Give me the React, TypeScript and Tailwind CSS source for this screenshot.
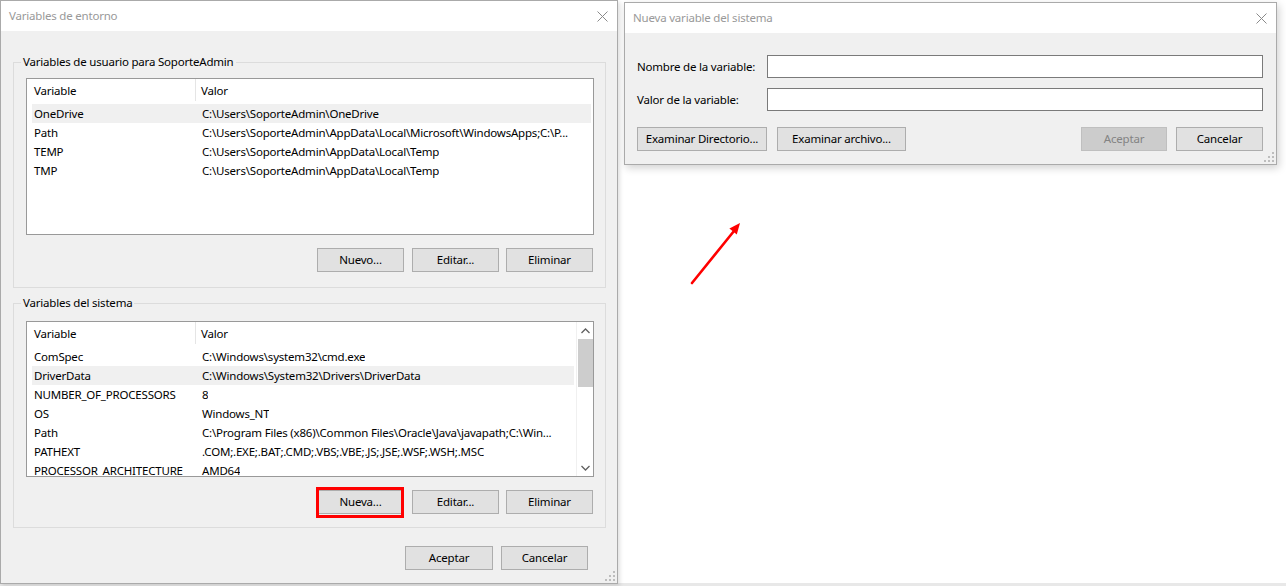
import React from "react";

const FONT = { fontFamily: '"Noto Sans", "Liberation Sans", sans-serif' };

function CloseIcon({ color = "#8a8a8a" }: { color?: string }) {
  return (
    <svg width="11" height="11" viewBox="0 0 11 11">
      <path d="M0.5 0.5 L10.5 10.5 M10.5 0.5 L0.5 10.5" stroke={color} strokeWidth="1" fill="none" />
    </svg>
  );
}

function Grip() {
  return (
    <svg width="10" height="10" viewBox="0 0 10 10">
      {[
        [8, 0],
        [4, 4],
        [8, 4],
        [0, 8],
        [4, 8],
        [8, 8],
      ].map(([x, y], i) => (
        <rect key={i} x={x} y={y} width="2" height="2" fill="#bdbdbd" />
      ))}
    </svg>
  );
}

function Btn({
  label,
  w,
  disabled = false,
}: {
  label: string;
  w: string;
  disabled?: boolean;
}) {
  return (
    <div
      className={`${w} h-[24px] flex items-center justify-center border whitespace-nowrap ${
        disabled
          ? "bg-[#cccccc] border-[#bfbfbf] text-[#838383]"
          : "bg-[#e1e1e1] border-[#adadad] text-black"
      }`}
    >
      {label}
    </div>
  );
}

type Row = { name: string; value: string; selected?: boolean };

function ListHeader({ width }: { width: string }) {
  return (
    <div className={`${width} h-[25px] flex bg-white shrink-0`}>
      <div className="w-[169px] h-[22px] pl-[7px] pt-[1px] flex items-center border-r border-[#e5e5e5]">
        Variable
      </div>
      <div className="h-[22px] pt-[1px] pl-[5px] flex items-center">Valor</div>
    </div>
  );
}

function ListRows({ rows, rowWidth }: { rows: Row[]; rowWidth: string }) {
  return (
    <div className="flex flex-col">
      {rows.map((r) => (
        <div
          key={r.name}
          className={`${rowWidth} ml-[5px] h-[19px] flex items-center whitespace-nowrap overflow-hidden ${
            r.selected ? "bg-[#f0f0f0]" : ""
          }`}
        >
          <div className="w-[164px] pl-[2px] shrink-0">{r.name}</div>
          <div className="pl-[6px] overflow-hidden">{r.value}</div>
        </div>
      ))}
    </div>
  );
}

function GroupBox({
  title,
  className,
  children,
}: {
  title: string;
  className: string;
  children: React.ReactNode;
}) {
  return (
    <div className={`relative border border-[#dcdcdc] ${className}`}>
      <span className="absolute left-[7px] -top-[9px] px-[2px] bg-[#f0f0f0] leading-[16px] text-black">
        {title}
      </span>
      {children}
    </div>
  );
}

const userRows: Row[] = [
  { name: "OneDrive", value: "C:\\Users\\SoporteAdmin\\OneDrive", selected: true },
  {
    name: "Path",
    value: "C:\\Users\\SoporteAdmin\\AppData\\Local\\Microsoft\\WindowsApps;C:\\P...",
  },
  { name: "TEMP", value: "C:\\Users\\SoporteAdmin\\AppData\\Local\\Temp" },
  { name: "TMP", value: "C:\\Users\\SoporteAdmin\\AppData\\Local\\Temp" },
];

const systemRows: Row[] = [
  { name: "ComSpec", value: "C:\\Windows\\system32\\cmd.exe" },
  { name: "DriverData", value: "C:\\Windows\\System32\\Drivers\\DriverData", selected: true },
  { name: "NUMBER_OF_PROCESSORS", value: "8" },
  { name: "OS", value: "Windows_NT" },
  {
    name: "Path",
    value: "C:\\Program Files (x86)\\Common Files\\Oracle\\Java\\javapath;C:\\Win...",
  },
  { name: "PATHEXT", value: ".COM;.EXE;.BAT;.CMD;.VBS;.VBE;.JS;.JSE;.WSF;.WSH;.MSC" },
  { name: "PROCESSOR_ARCHITECTURE", value: "AMD64" },
];

function Chevron({ up }: { up: boolean }) {
  return (
    <svg width="9" height="6" viewBox="0 0 9 6">
      <path
        d={up ? "M0.5 5 L4.5 1 L8.5 5" : "M0.5 1 L4.5 5 L8.5 1"}
        stroke="#606060"
        strokeWidth="1.3"
        fill="none"
      />
    </svg>
  );
}

function EnvWindow() {
  return (
    <div className="absolute left-0 top-0 w-[618px] h-[584px] bg-[#f0f0f0] border border-[#aaaaaa] shadow-[2px_2px_4px_rgba(0,0,0,0.12)] flex flex-col text-black">
      {/* title bar */}
      <div className="h-[30px] bg-white flex items-center justify-between pl-[8px] pr-[9px] shrink-0">
        <span className="text-[#999999]">Variables de entorno</span>
        <CloseIcon />
      </div>

      <div className="flex flex-col pl-[12px] pr-[11px]">
        {/* user variables */}
        <GroupBox title="Variables de usuario para SoporteAdmin" className="mt-[31px] pt-[15px] pl-[12px] pb-[15px]">
          <div className="w-[568px] h-[157px] border border-[#999999] bg-white flex flex-col">
            <ListHeader width="w-[564px]" />
            <ListRows rows={userRows} rowWidth="w-[559px]" />
          </div>
          <div className="flex justify-end mt-[13px] pr-[12px]">
            <Btn label="Nuevo..." w="w-[87px]" />
            <div className="w-[8px]" />
            <Btn label="Editar..." w="w-[87px]" />
            <div className="w-[7px]" />
            <Btn label="Eliminar" w="w-[87px]" />
          </div>
        </GroupBox>

        {/* system variables */}
        <GroupBox title="Variables del sistema" className="mt-[15px] pt-[17px] pl-[12px] pb-[13px]">
          <div className="w-[568px] h-[156px] border border-[#999999] bg-white flex overflow-hidden">
            <div className="flex-1 flex flex-col overflow-hidden">
              <ListHeader width="w-[548px]" />
              <ListRows rows={systemRows} rowWidth="w-[542px]" />
            </div>
            <div className="w-[17px] flex flex-col items-center bg-white border-l border-[#f0f0f0]">
              <div className="h-[17px] flex items-center justify-center">
                <Chevron up />
              </div>
              <div className="w-[15px] h-[48px] bg-[#cdcdcd]" />
              <div className="flex-1" />
              <div className="h-[17px] flex items-center justify-center">
                <Chevron up={false} />
              </div>
            </div>
          </div>
          <div className="flex justify-end mt-[13px] pr-[12px]">
            <div className="relative">
              <Btn label="Nueva..." w="w-[87px]" />
              <div className="absolute -left-[1px] -top-[3px] right-0 -bottom-[4px] border-[3px] border-[#ff0000]" />
            </div>
            <div className="w-[8px]" />
            <Btn label="Editar..." w="w-[87px]" />
            <div className="w-[7px]" />
            <Btn label="Eliminar" w="w-[87px]" />
          </div>
        </GroupBox>

        {/* dialog buttons */}
        <div className="flex justify-end gap-[8px] mt-[18px] pr-[18px]">
          <Btn label="Aceptar" w="w-[88px]" />
          <Btn label="Cancelar" w="w-[87px]" />
        </div>
      </div>

      <div className="flex-1" />
      <div className="flex justify-end pr-[2px] pb-[2px]">
        <Grip />
      </div>
    </div>
  );
}

function NewVarDialog() {
  return (
    <div className="absolute left-[624px] top-[2px] w-[653px] h-[163px] bg-[#f0f0f0] border border-[#aaaaaa] shadow-[2px_3px_8px_rgba(0,0,0,0.18)] flex flex-col text-black">
      <div className="h-[30px] bg-white flex items-center justify-between pl-[8px] pr-[9px] shrink-0">
        <span className="text-[#999999]">Nueva variable del sistema</span>
        <CloseIcon />
      </div>
      <div className="flex flex-col pl-[12px] pr-[13px]">
        <div className="flex items-center mt-[22px]">
          <div className="w-[130px] whitespace-nowrap">Nombre de la variable:</div>
          <div className="w-[496px] h-[23px] bg-white border border-[#7a7a7a]" />
        </div>
        <div className="flex items-center mt-[10px]">
          <div className="w-[130px] whitespace-nowrap">Valor de la variable:</div>
          <div className="w-[496px] h-[23px] bg-white border border-[#7a7a7a]" />
        </div>
        <div className="flex items-center mt-[16px]">
          <Btn label="Examinar Directorio..." w="w-[130px]" />
          <div className="w-[10px]" />
          <Btn label="Examinar archivo..." w="w-[129px]" />
          <div className="flex-1" />
          <Btn label="Aceptar" w="w-[86px]" disabled />
          <div className="w-[9px]" />
          <Btn label="Cancelar" w="w-[87px]" />
        </div>
      </div>
      <div className="flex-1" />
      <div className="flex justify-end pr-[2px] pb-[2px]">
        <Grip />
      </div>
    </div>
  );
}

function Arrow() {
  return (
    <svg className="absolute left-[680px] top-[215px]" width="70" height="75" viewBox="0 0 70 75">
      <line x1="12" y1="68" x2="54" y2="16" stroke="#ff0000" strokeWidth="2.6" strokeLinecap="round" />
      <polygon points="60,8 56.8,19.6 49.4,13.6" fill="#ff0000" />
    </svg>
  );
}

export default function App() {
  return (
    <div
      className="relative w-[1286px] h-[586px] bg-white overflow-hidden text-[11.5px] tracking-[-0.2px]"
      style={FONT}
    >
      <div className="absolute left-0 right-0 bottom-0 h-[3px] bg-[#e8e8e8]" />
      <EnvWindow />
      <NewVarDialog />
      <Arrow />
    </div>
  );
}
